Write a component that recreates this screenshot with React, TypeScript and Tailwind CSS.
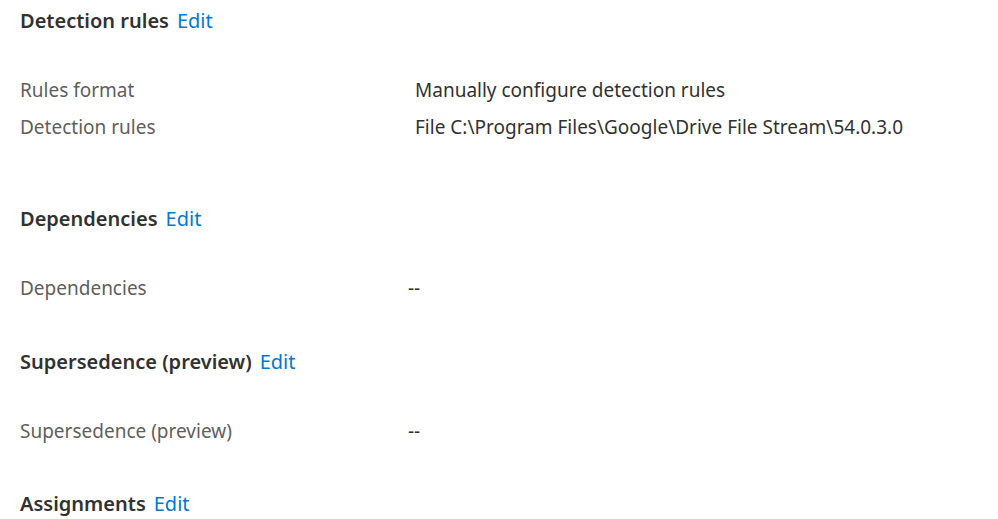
const font = { fontFamily: '"Noto Sans", "Open Sans", sans-serif' };

function Heading({ title }: { title: string }) {
  return (
    <h2 className="flex items-baseline gap-2 text-[20px] leading-[28px] font-semibold text-[#323130]">
      {title}
      <a href="#" className="font-normal text-[#0078d4]">
        Edit
      </a>
    </h2>
  );
}

function Row({ label, value }: { label: string; value: string }) {
  return (
    <div className="flex h-[37px] items-center text-[19px]">
      <span className="w-[395px] shrink-0 text-[#605e5c]">{label}</span>
      <span className="text-[#323130]">{value}</span>
    </div>
  );
}

function DashRow({ label }: { label: string }) {
  return (
    <div className="flex h-[37px] items-center text-[19px]">
      <span className="w-[388px] shrink-0 text-[#605e5c]">{label}</span>
      <span className="text-[#323130]">--</span>
    </div>
  );
}

export default function App() {
  return (
    <div className="min-h-screen bg-white pl-[20px] pt-[7px]" style={font}>
      <section>
        <Heading title="Detection rules" />
        <div className="mt-[37px] flex flex-col">
          <Row label="Rules format" value="Manually configure detection rules" />
          <Row
            label="Detection rules"
            value="File C:\Program Files\Google\Drive File Stream\54.0.3.0"
          />
        </div>
      </section>

      <section className="mt-[59px]">
        <Heading title="Dependencies" />
        <div className="mt-[37px]">
          <DashRow label="Dependencies" />
        </div>
      </section>

      <section className="mt-[41px]">
        <Heading title="Supersedence (preview)" />
        <div className="mt-[37px]">
          <DashRow label="Supersedence (preview)" />
        </div>
      </section>

      <section className="mt-[40px]">
        <Heading title="Assignments" />
      </section>
    </div>
  );
}
